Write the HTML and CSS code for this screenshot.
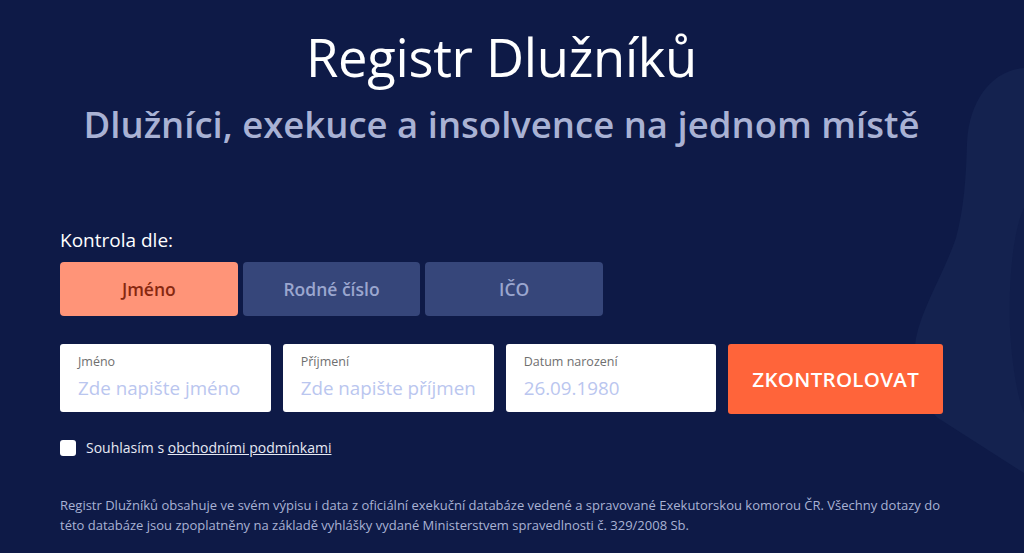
FILE: index.html
```html
<!DOCTYPE html>
<html lang="cs">
<head>
<meta charset="utf-8">
<title>Registr Dlužníků</title>
<link rel="stylesheet" href="styles.css">
</head>
<body>
<div class="page">
  <svg class="silhouette" width="112" height="410" viewBox="0 0 112 410" aria-hidden="true">
    <path class="sil-outer" d="M112 0 C82 2 57 30 55 75 C54 110 52 140 44 170 C32 205 10 240 4 270 C0 295 4 330 26 350 L112 405 Z"/>
    <path class="sil-inner" d="M112 140 C102 160 96 210 98 260 C100 300 106 330 112 345 Z"/>
  </svg>
  <main class="container">
    <header class="hero">
      <h1 class="title">Registr Dlužníků</h1>
      <p class="subtitle">Dlužníci, exekuce a insolvence na jednom místě</p>
    </header>

    <section class="search">
      <div class="search-label">Kontrola dle:</div>
      <div class="tabs">
        <button class="tab tab-active">Jméno</button>
        <button class="tab">Rodné číslo</button>
        <button class="tab">IČO</button>
      </div>

      <div class="fields">
        <label class="field">
          <span class="field-label">Jméno</span>
          <span class="field-placeholder">Zde napište jméno</span>
        </label>
        <label class="field">
          <span class="field-label">Příjmení</span>
          <span class="field-placeholder">Zde napište příjmen</span>
        </label>
        <label class="field">
          <span class="field-label">Datum narození</span>
          <span class="field-placeholder">26.09.1980</span>
        </label>
        <button class="submit">ZKONTROLOVAT</button>
      </div>

      <div class="consent">
        <span class="checkbox"></span>
        <span class="consent-text">Souhlasím s <a class="consent-link" href="#">obchodními podmínkami</a></span>
      </div>
    </section>

    <p class="note">Registr Dlužníků obsahuje ve svém výpisu i data z oficiální exekuční databáze vedené a spravované Exekutorskou komorou ČR. Všechny dotazy do této databáze jsou zpoplatněny na základě vyhlášky vydané Ministerstvem spravedlnosti č. 329/2008 Sb.</p>
  </main>
</div>
</body>
</html>
```

FILE: styles.css
```css
* { box-sizing: border-box; }
html, body { margin: 0; padding: 0; }
body {
  background: #0e1a47;
  font-family: "Open Sans", "Noto Sans", sans-serif;
  color: #ffffff;
  width: 1024px;
  height: 553px;
  overflow: hidden;
}
.page {
  position: relative;
  width: 1024px;
  height: 553px;
  overflow: hidden;
}
.silhouette {
  position: absolute;
  right: 0;
  top: 68px;
}
.sil-outer { fill: #14224f; }
.sil-inner { fill: #111e4b; }

.container {
  position: relative;
  width: 883px;
  margin-left: 60px;
  padding-top: 27px;
}
.hero { text-align: center; }
.title {
  margin: 0;
  font-weight: 400;
  font-size: 52.5px;
  line-height: 60px;
  letter-spacing: -0.3px;
  color: #ffffff;
}
.subtitle {
  margin: 15px 0 0 0;
  font-weight: 600;
  font-size: 36.5px;
  line-height: 44px;
  color: #a9b2d4;
}

.search { margin-top: 82px; }
.search-label {
  font-size: 19px;
  line-height: 24px;
  margin-bottom: 10px;
}
.tabs {
  display: flex;
  gap: 5px;
  width: 543px;
}
.tab {
  flex: 1;
  height: 54px;
  border: none;
  border-radius: 4px;
  background: #36467a;
  color: #9ba6cf;
  font-family: inherit;
  font-weight: 600;
  font-size: 17.5px;
}
.tab-active {
  background: #ff9478;
  color: #872810;
}

.fields {
  display: flex;
  gap: 12px;
  margin-top: 28px;
  align-items: flex-start;
}
.field {
  width: 211px;
  height: 68px;
  background: #ffffff;
  border-radius: 3px;
  padding: 9px 18px 0 18px;
  display: flex;
  flex-direction: column;
}
.field-label {
  font-size: 12.5px;
  line-height: 17px;
  color: #6f6f6f;
}
.field-placeholder {
  margin-top: 5px;
  font-size: 18.8px;
  line-height: 26px;
  color: #bac6ef;
  white-space: nowrap;
  overflow: hidden;
}
.submit {
  width: 215px;
  height: 70px;
  border: none;
  border-radius: 3px;
  background: #ff643a;
  color: #ffffff;
  font-family: inherit;
  font-weight: 600;
  font-size: 20.5px;
  letter-spacing: 0.3px;
}

.consent {
  display: flex;
  align-items: center;
  gap: 10px;
  margin-top: 24px;
}
.checkbox {
  width: 16px;
  height: 16px;
  background: #ffffff;
  border-radius: 3px;
}
.consent-text {
  font-size: 14px;
  line-height: 20px;
  color: #e6e9f3;
}
.consent-link { color: #e6e9f3; text-decoration: underline; }

.note {
  margin: 37px -10px 0 0;
  font-size: 13px;
  line-height: 20px;
  color: #a9b2d4;
}
```
